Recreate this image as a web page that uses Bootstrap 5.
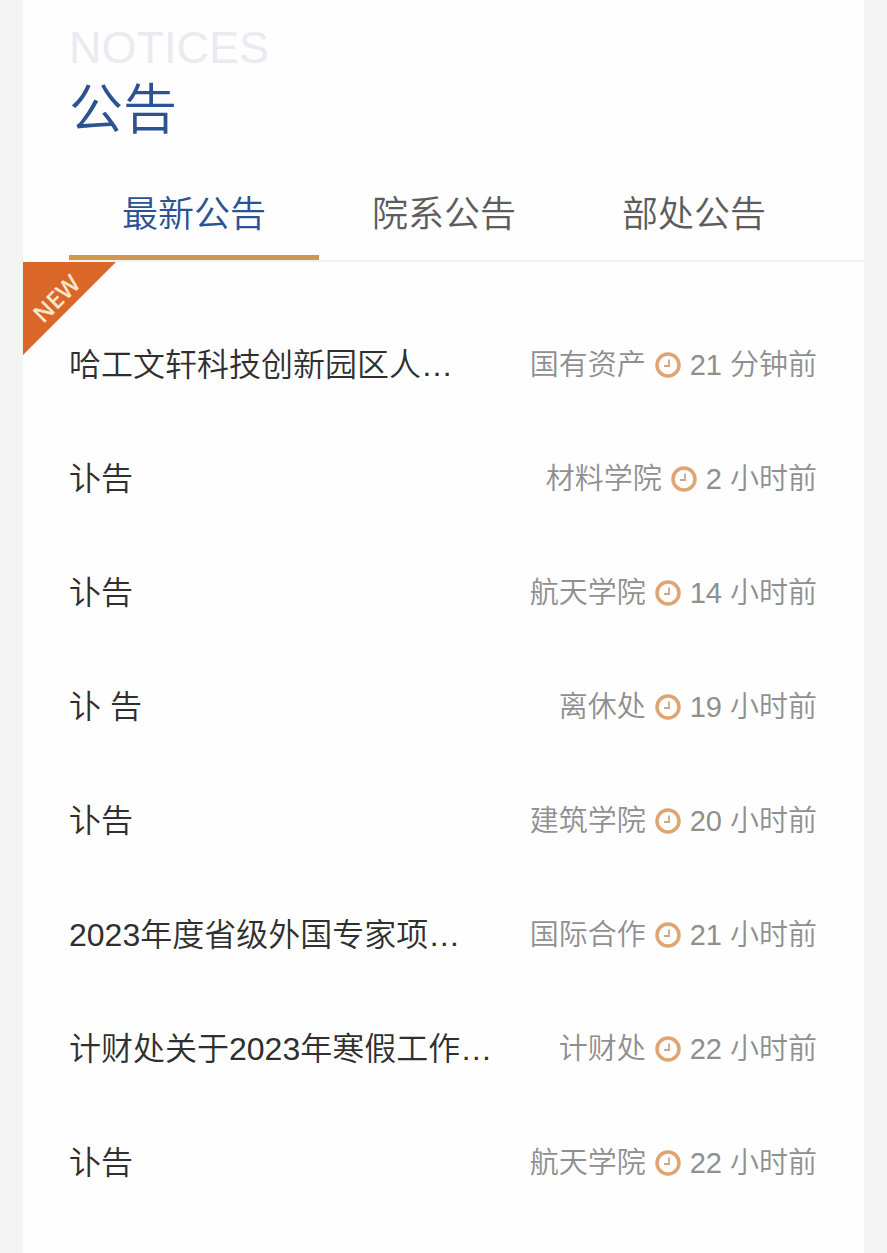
<!DOCTYPE html>
<html lang="zh-CN">
<head>
<meta charset="utf-8">
<meta name="viewport" content="width=device-width, initial-scale=1">
<title>公告</title>
<link href="https://cdn.jsdelivr.net/npm/bootstrap@5.3.0/dist/css/bootstrap.min.css" rel="stylesheet">
<style>
  body { background: #f4f4f4; font-family: "Liberation Sans", "Noto Sans CJK SC", sans-serif; font-weight: 350; color: #2f2f2f; }
  .notice-panel { margin: 0 23px; background: #fefefe; }
  .panel-head { padding: 24px 46px 0; }
  .head-en { font-size: 45px; line-height: 48px; color: #e9ebf0; }
  .head-zh { font-size: 54px; line-height: 76px; color: #2b5293; font-weight: 350; }
  .notice-tabs { margin: 22px 0 0 46px; border-bottom: 2px solid #f1f1f1; }
  .notice-tabs .nav-item { flex: 0 1 250px; }
  .notice-tabs .nav-link { width: 100%; padding: 18px 0 13px; border-bottom: 5px solid transparent; font-size: 36px; line-height: 54px; font-weight: 350; color: #5c5c5c; }
  .notice-tabs .nav-link.active { color: #2b5293; border-bottom-color: #d0984e; }
  .notice-list { padding: 46px 47px 0 46px; }
  .corner-new { width: 93px; height: 93px; }
  .notice-row { height: 114px; }
  .notice-title { font-size: 32px; line-height: 48px; color: #2f2f2f; }
  .notice-meta { gap: 9px; font-size: 29px; line-height: 48px; color: #8f8f8f; }
</style>
</head>
<body>
<main class="notice-panel min-vh-100">
  <header class="panel-head">
    <div class="head-en">NOTICES</div>
    <h1 class="head-zh mb-0">公告</h1>
  </header>

  <ul class="nav notice-tabs flex-nowrap" role="tablist">
    <li class="nav-item" role="presentation"><button class="nav-link active bg-transparent border-top-0 border-start-0 border-end-0" type="button" role="tab" aria-selected="true">最新公告</button></li>
    <li class="nav-item" role="presentation"><button class="nav-link bg-transparent border-top-0 border-start-0 border-end-0" type="button" role="tab" aria-selected="false">院系公告</button></li>
    <li class="nav-item" role="presentation"><button class="nav-link bg-transparent border-top-0 border-start-0 border-end-0" type="button" role="tab" aria-selected="false">部处公告</button></li>
  </ul>

  <svg width="0" height="0" class="position-absolute" aria-hidden="true">
    <symbol id="clock" viewBox="0 0 26 26">
      <circle cx="13" cy="13" r="11" fill="none" stroke="#dfa472" stroke-width="3.5"/>
      <path d="M14 7.5v6.5H9" fill="none" stroke="#cfa588" stroke-width="1.8"/>
    </symbol>
  </svg>

  <section class="position-relative">
    <svg class="corner-new position-absolute top-0 start-0" viewBox="0 0 93 93" role="img" aria-label="NEW">
      <path d="M0 0H93L0 93z" fill="#da6727"/>
      <text x="33" y="36" transform="rotate(-45 33 36)" text-anchor="middle" dominant-baseline="central" font-family="Open Sans, sans-serif" font-weight="600" font-size="24" fill="#fbe6cd">NEW</text>
    </svg>
    <ul class="notice-list list-unstyled mb-0">
      <li class="notice-row d-flex align-items-center justify-content-between">
        <a href="#" class="notice-title text-decoration-none text-truncate">哈工文轩科技创新园区人…</a>
        <span class="notice-meta d-flex align-items-center flex-shrink-0"><span>国有资产</span><svg width="26" height="26" aria-hidden="true"><use href="#clock"/></svg><time>21 分钟前</time></span>
      </li>
      <li class="notice-row d-flex align-items-center justify-content-between">
        <a href="#" class="notice-title text-decoration-none text-truncate">讣告</a>
        <span class="notice-meta d-flex align-items-center flex-shrink-0"><span>材料学院</span><svg width="26" height="26" aria-hidden="true"><use href="#clock"/></svg><time>2 小时前</time></span>
      </li>
      <li class="notice-row d-flex align-items-center justify-content-between">
        <a href="#" class="notice-title text-decoration-none text-truncate">讣告</a>
        <span class="notice-meta d-flex align-items-center flex-shrink-0"><span>航天学院</span><svg width="26" height="26" aria-hidden="true"><use href="#clock"/></svg><time>14 小时前</time></span>
      </li>
      <li class="notice-row d-flex align-items-center justify-content-between">
        <a href="#" class="notice-title text-decoration-none text-truncate">讣 告</a>
        <span class="notice-meta d-flex align-items-center flex-shrink-0"><span>离休处</span><svg width="26" height="26" aria-hidden="true"><use href="#clock"/></svg><time>19 小时前</time></span>
      </li>
      <li class="notice-row d-flex align-items-center justify-content-between">
        <a href="#" class="notice-title text-decoration-none text-truncate">讣告</a>
        <span class="notice-meta d-flex align-items-center flex-shrink-0"><span>建筑学院</span><svg width="26" height="26" aria-hidden="true"><use href="#clock"/></svg><time>20 小时前</time></span>
      </li>
      <li class="notice-row d-flex align-items-center justify-content-between">
        <a href="#" class="notice-title text-decoration-none text-truncate">2023年度省级外国专家项…</a>
        <span class="notice-meta d-flex align-items-center flex-shrink-0"><span>国际合作</span><svg width="26" height="26" aria-hidden="true"><use href="#clock"/></svg><time>21 小时前</time></span>
      </li>
      <li class="notice-row d-flex align-items-center justify-content-between">
        <a href="#" class="notice-title text-decoration-none text-truncate">计财处关于2023年寒假工作…</a>
        <span class="notice-meta d-flex align-items-center flex-shrink-0"><span>计财处</span><svg width="26" height="26" aria-hidden="true"><use href="#clock"/></svg><time>22 小时前</time></span>
      </li>
      <li class="notice-row d-flex align-items-center justify-content-between">
        <a href="#" class="notice-title text-decoration-none text-truncate">讣告</a>
        <span class="notice-meta d-flex align-items-center flex-shrink-0"><span>航天学院</span><svg width="26" height="26" aria-hidden="true"><use href="#clock"/></svg><time>22 小时前</time></span>
      </li>
    </ul>
  </section>
</main>
<script src="https://cdn.jsdelivr.net/npm/bootstrap@5.3.0/dist/js/bootstrap.bundle.min.js"></script>
</body>
</html>
